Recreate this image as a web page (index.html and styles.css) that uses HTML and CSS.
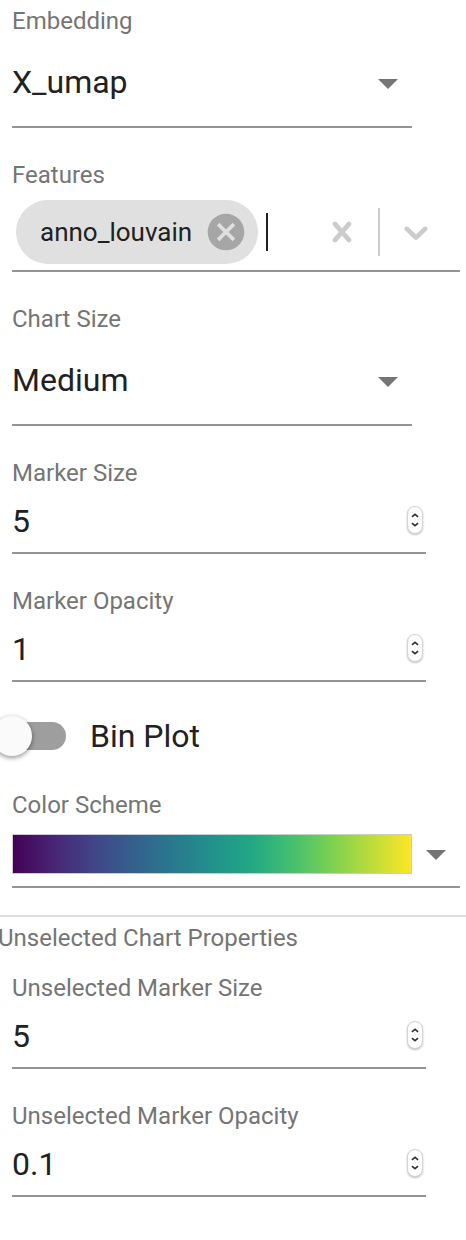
FILE: index.html
```html
<!DOCTYPE html>
<html lang="en">
<head>
<meta charset="utf-8">
<meta name="viewport" content="width=device-width, initial-scale=1">
<title>Chart Properties</title>
<link rel="stylesheet" href="styles.css">
</head>
<body>
<svg class="sprite" aria-hidden="true">
  <symbol id="arrow" viewBox="0 0 24 24"><path d="M7 10l5 5 5-5z"/></symbol>
  <symbol id="stepper" viewBox="0 0 16 28">
    <path d="M4.500 10.500L8 7.500l3.500 3M4.500 17.500L8 20.500l3.500-3" fill="none" stroke="#333" stroke-width="1.900"/>
  </symbol>
</svg>
<main class="panel">
  <section class="group">
    <div class="field field-select">
      <label class="label" for="embedding">Embedding</label>
      <div class="control">
        <select class="select" id="embedding"><option>X_umap</option></select>
        <svg class="arrow select-arrow" aria-hidden="true"><use href="#arrow"/></svg>
      </div>
    </div>

    <div class="field">
      <label class="label" for="features">Features</label>
      <div class="multi">
        <div class="chip">
          <span class="chip-text">anno_louvain</span>
          <button class="icon-button chip-remove" type="button" aria-label="Remove anno_louvain">
            <svg viewBox="0 0 24 24"><path d="M12 2C6.470 2 2 6.470 2 12s4.470 10 10 10 10-4.470 10-10S17.530 2 12 2zm5 13.590L15.590 17 12 13.410 8.410 17 7 15.590 10.590 12 7 8.410 8.410 7 12 10.590 15.590 7 17 8.410 13.410 12 17 15.590z"/></svg>
          </button>
        </div>
        <input class="multi-input" id="features" type="text" autocomplete="off">
        <button class="icon-button indicator" type="button" aria-label="Clear features">
          <svg viewBox="0 0 20 20"><path d="M14.348 14.849c-0.469 0.469-1.229 0.469-1.697 0l-2.651-3.030-2.651 3.029c-0.469 0.469-1.229 0.469-1.697 0-0.469-0.469-0.469-1.229 0-1.697l2.758-3.150-2.759-3.152c-0.469-0.469-0.469-1.228 0-1.697s1.228-0.469 1.697 0l2.652 3.031 2.651-3.031c0.469-0.469 1.228-0.469 1.697 0s0.469 1.229 0 1.697l-2.758 3.152 2.758 3.150c0.469 0.469 0.469 1.229 0 1.698z"/></svg>
        </button>
        <span class="separator"></span>
        <button class="icon-button indicator" type="button" aria-label="Show features">
          <svg viewBox="0 0 20 20"><path d="M4.516 7.548c0.436-0.446 1.043-0.481 1.576 0l3.908 3.747 3.908-3.747c0.533-0.481 1.141-0.446 1.574 0 0.436 0.445 0.408 1.197 0 1.615-0.406 0.418-4.695 4.502-4.695 4.502-0.217 0.223-0.502 0.335-0.787 0.335s-0.570-0.112-0.789-0.335c0 0-4.287-4.084-4.695-4.502s-0.436-1.170 0-1.615z"/></svg>
        </button>
      </div>
    </div>

    <div class="field field-select">
      <label class="label" for="chart-size">Chart Size</label>
      <div class="control">
        <select class="select" id="chart-size"><option>Medium</option></select>
        <svg class="arrow select-arrow" aria-hidden="true"><use href="#arrow"/></svg>
      </div>
    </div>

    <div class="field field-number">
      <label class="label" for="marker-size">Marker Size</label>
      <div class="control">
        <input class="number" id="marker-size" type="number" value="5">
        <svg class="stepper" aria-hidden="true"><use href="#stepper"/></svg>
      </div>
    </div>

    <div class="field field-number">
      <label class="label" for="marker-opacity">Marker Opacity</label>
      <div class="control">
        <input class="number" id="marker-opacity" type="number" step="0.1" value="1">
        <svg class="stepper" aria-hidden="true"><use href="#stepper"/></svg>
      </div>
    </div>

    <label class="switch-row">
      <input class="switch" type="checkbox" role="switch">
      <span>Bin Plot</span>
    </label>

    <div class="field">
      <label class="label" for="color-scheme">Color Scheme</label>
      <button class="scheme" id="color-scheme" type="button">
        <span class="ramp"></span>
        <svg class="arrow" aria-hidden="true"><use href="#arrow"/></svg>
      </button>
    </div>
  </section>

  <section class="group group-unselected">
    <h2 class="heading">Unselected Chart Properties</h2>
    <div class="field field-number">
      <label class="label" for="unselected-size">Unselected Marker Size</label>
      <div class="control">
        <input class="number" id="unselected-size" type="number" value="5">
        <svg class="stepper" aria-hidden="true"><use href="#stepper"/></svg>
      </div>
    </div>

    <div class="field field-number">
      <label class="label" for="unselected-opacity">Unselected Marker Opacity</label>
      <div class="control">
        <input class="number" id="unselected-opacity" type="number" step="0.1" value="0.1">
        <svg class="stepper" aria-hidden="true"><use href="#stepper"/></svg>
      </div>
    </div>
  </section>
</main>
</body>
</html>
```

FILE: styles.css
```css
* {
  box-sizing: border-box;
}

body {
  margin: 0;
  background: #fff;
  color: #212121;
  font: 32px/44px Roboto, "Liberation Sans", sans-serif;
}

input,
select,
button {
  margin: 0;
  padding: 0;
  border: 0;
  border-radius: 0;
  outline: 0;
  background: none;
  color: inherit;
  font: inherit;
}

.sprite {
  position: absolute;
  width: 0;
  height: 0;
}

.panel {
  overflow-x: clip;
}

.group {
  display: flex;
  flex-direction: column;
  gap: 32px;
  padding: 6px 6px 27px 12px;
}

.group-unselected {
  padding-top: 0;
  border-top: 2px solid #e0e0e0;
}

.heading {
  margin: 0 0 -18px -14px;
  color: #757575;
  font-size: 24px;
  font-weight: 400;
  line-height: 42px;
}

.field-select {
  margin-right: 48px;
}

.field-number {
  margin-right: 34px;
}

.label {
  display: block;
  color: #757575;
  font-size: 24px;
  line-height: 30px;
}

.control {
  position: relative;
  border-bottom: 2px solid #949494;
}

.select,
.number {
  display: block;
  width: 100%;
  appearance: none;
}

.select {
  height: 90px;
  padding-top: 2px;
}

.number {
  height: 64px;
  padding-top: 2px;
  appearance: textfield;
}

.number::-webkit-inner-spin-button,
.number::-webkit-outer-spin-button {
  margin: 0;
  appearance: none;
}

.arrow {
  display: block;
  width: 48px;
  height: 48px;
  fill: #757575;
}

.select-arrow {
  position: absolute;
  top: 23px;
  right: 0;
  pointer-events: none;
}

.stepper {
  position: absolute;
  top: 18px;
  right: 3px;
  width: 16px;
  height: 28px;
  border: 1px solid #d4d4d4;
  border-radius: 8px;
  background: #fff;
  box-shadow: 0 1px 2px rgba(0, 0, 0, 0.25);
  pointer-events: none;
}

.multi {
  display: flex;
  align-items: center;
  padding: 10px 8px 6px 4px;
  border-bottom: 2px solid #949494;
}

.chip {
  display: flex;
  align-items: center;
  height: 64px;
  padding: 0 10px 0 24px;
  border-radius: 32px;
  background: #e0e0e0;
  font-size: 26px;
}

.chip-text {
  margin-right: 12px;
}

.icon-button {
  display: block;
  flex: none;
}

.icon-button svg {
  display: block;
}

.chip-remove svg {
  width: 44px;
  height: 44px;
  fill: #a6a6a6;
}

.multi-input {
  flex: 1;
  min-width: 0;
  height: 38px;
  margin-left: 8px;
  border-left: 2px solid #212121;
}

.indicator {
  padding: 12px 16px;
}

.indicator svg {
  width: 40px;
  height: 40px;
  fill: #ccc;
}

.separator {
  flex: none;
  width: 2px;
  height: 48px;
  background: #ccc;
}

.switch-row {
  display: flex;
  align-items: center;
  gap: 24px;
}

.switch {
  position: relative;
  width: 68px;
  height: 28px;
  margin-left: -14px;
  border-radius: 14px;
  background: #9e9e9e;
  appearance: none;
}

.switch::before {
  content: "";
  position: absolute;
  top: -6px;
  left: -6px;
  width: 40px;
  height: 40px;
  border-radius: 50%;
  background: #fafafa;
  box-shadow: 0 2px 4px rgba(0, 0, 0, 0.3), 0 1px 6px rgba(0, 0, 0, 0.15);
}

.switch:checked::before {
  left: 34px;
}

.scheme {
  display: flex;
  align-items: center;
  width: 100%;
  height: 68px;
  padding-top: 2px;
  border-bottom: 2px solid #949494;
}

.ramp {
  flex: 1;
  height: 40px;
  border: 1px solid #ccc;
  background: linear-gradient(to right, #440154, #482475, #414487, #355f8d, #2a788e, #21918c, #22a884, #44bf70 70%, #7ad151 80%, #fde725) padding-box;
}
```
